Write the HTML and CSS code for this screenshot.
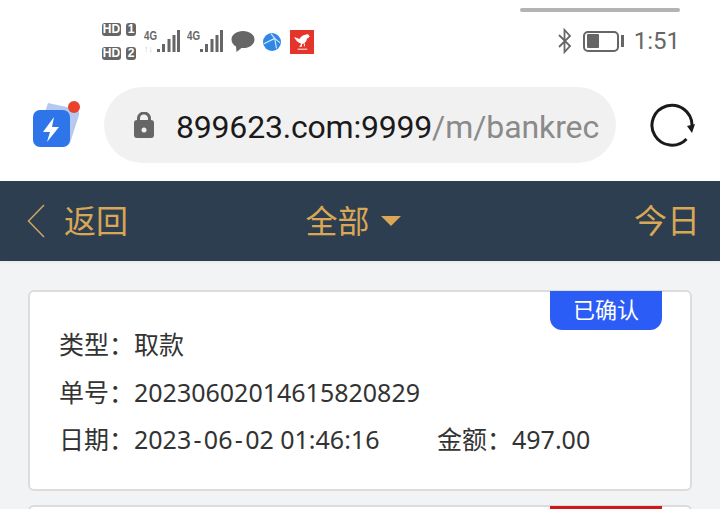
FILE: index.html

```html
<!DOCTYPE html>
<html lang="zh-CN">
<head>
  <meta charset="UTF-8">
  <title>全部</title>
  <link rel="stylesheet" href="styles.css">
</head>
<body>
  <div class="gesture-bar"></div>

  <div class="status-bar">
    <div class="status-left">
      <div class="hd-col">
        <div class="hd-row"><span class="hd-pill">HD</span><span class="sim-num">1</span></div>
        <div class="hd-row"><span class="hd-pill">HD</span><span class="sim-num">2</span></div>
      </div>
      <svg class="signal" width="36" height="26" viewBox="0 0 36 26">
        <text x="0" y="12" class="net-label" textLength="13" lengthAdjust="spacingAndGlyphs">4G</text>
        <text x="0" y="24" class="net-sub">↑↓</text>
        <rect x="13" y="21" width="3" height="3" fill="#666"/>
        <rect x="18" y="16" width="3" height="8" fill="#666"/>
        <rect x="23.500" y="11" width="3" height="13" fill="#666"/>
        <rect x="28.500" y="7" width="3" height="17" fill="#666"/>
        <rect x="33" y="2" width="3" height="22" fill="#666"/>
      </svg>
      <svg class="signal" width="36" height="26" viewBox="0 0 36 26">
        <text x="0" y="12" class="net-label" textLength="13" lengthAdjust="spacingAndGlyphs">4G</text>
        <rect x="13" y="21" width="3" height="3" fill="#666"/>
        <rect x="18" y="16" width="3" height="8" fill="#666"/>
        <rect x="23.500" y="11" width="3" height="13" fill="#666"/>
        <rect x="28.500" y="7" width="3" height="17" fill="#666"/>
        <rect x="33" y="2" width="3" height="22" fill="#666"/>
      </svg>
      <svg class="msg-icon" width="24" height="22" viewBox="0 0 24 22">
        <path d="M12 0C5.500 0 .5 3.600 .5 8.500c0 3 1.800 5.500 4.500 7L5.500 21l5-4c.5 0 1 .1 1.500 .1 6.500 0 11.500-3.700 11.500-8.600S18.500 0 12 0z" fill="#666"/>
      </svg>
      <svg class="globe-icon" width="18" height="18" viewBox="0 0 20 20">
        <circle cx="10" cy="10" r="10" fill="#2f88e6"/>
        <path d="M1 12l12-6 2 11M13 6l6 5M13 6L9 1" fill="none" stroke="#d8ebfb" stroke-width="1.200"/>
      </svg>
      <svg class="app-icon" width="24" height="24" viewBox="0 0 25 25">
        <rect width="25" height="25" fill="#e5352a"/>
        <path d="M5 8l5 2c1-3 5-5 9-5l1 2-3 2c0 3-2 5-5 5l-4-2zM12 14v3h-2M15 14v3M8 20h10" fill="#fff" stroke="#fff" stroke-width="1"/>
      </svg>
    </div>
    <div class="status-right">
      <svg width="16" height="26" viewBox="0 0 16 26">
        <path d="M2 7l11 11-5.500 6V2L13 8 2 19" fill="none" stroke="#666" stroke-width="1.800"/>
      </svg>
      <div class="battery">
        <div class="battery-body"><div class="battery-fill"></div></div>
        <div class="battery-cap"></div>
      </div>
      <span class="clock">1:51</span>
    </div>
  </div>

  <div class="url-row">
    <svg class="browser-logo" width="48" height="48" viewBox="0 0 48 48">
      <path d="M16 2L44 8Q48 10 47 14L38 42 10 20z" fill="#b5c8f0"/>
      <rect x="1" y="9" width="37" height="37" rx="7" fill="#2f75ea"/>
      <path d="M22 16L11 31h7L15 41 27 26h-7z" fill="#fff"/>
      <circle cx="42" cy="6" r="6" fill="#e8432e"/>
    </svg>
    <div class="url-box">
      <svg class="lock" width="20" height="26" viewBox="0 0 20 26">
        <path d="M4.500 10V6.500a5.500 5.500 0 0 1 11 0V10" fill="none" stroke="#666" stroke-width="3"/>
        <rect x="0" y="8" width="20" height="18" rx="3" fill="#666"/>
        <circle cx="10" cy="18" r="2.500" fill="#f1f1f1"/>
      </svg>
      <div class="url-text"><span class="url-host">899623.com:9999</span>/m/bankrec</div>
    </div>
    <svg class="reload" width="46" height="46" viewBox="0 0 46 46">
      <path d="M36.500 37A20 20 0 1 1 42 23" fill="none" stroke="#1a1a1a" stroke-width="3"/>
      <path d="M37 24l8-2-3 9z" fill="#1a1a1a"/>
    </svg>
  </div>

  <div class="nav">
    <div class="nav-back">
      <svg width="18" height="34" viewBox="0 0 18 34">
        <path d="M17 1L1.500 17 17 33" fill="none" stroke="#d0a560" stroke-width="1.500"/>
      </svg>
      <span>返回</span>
    </div>
    <div class="nav-title"><span>全部</span><span class="caret"></span></div>
    <div class="nav-today">今日</div>
  </div>

  <div class="list">
    <div class="card">
      <div class="badge badge-ok">已确认</div>
      <div class="line">类型：取款</div>
      <div class="line">单号：20230602014615820829</div>
      <div class="line line-split">
        <span class="date">日期：2023<span class="hy">-</span>06<span class="hy">-</span>02 01:46:16</span>
        <span>金额：497.00</span>
      </div>
    </div>
    <div class="card">
      <div class="badge badge-bad"></div>
    </div>
  </div>
</body>
</html>
```

FILE: styles.css

```css
html, body {
  margin: 0;
  padding: 0;
  height: 509px;
  overflow: hidden;
}

body {
  font-family: "Noto Sans", "Noto Sans CJK SC", sans-serif;
  background-color: #fff;
  position: relative;
}

.gesture-bar {
  position: absolute;
  top: 8px;
  left: 520px;
  width: 160px;
  height: 4px;
  border-radius: 2px;
  background-color: #b3b3b3;
}

.status-bar {
  display: flex;
  justify-content: space-between;
  align-items: center;
  height: 82px;
  padding: 0 40px 0 102px;
}

.status-left, .status-right {
  display: flex;
  align-items: center;
}

.hd-col {
  display: flex;
  flex-direction: column;
  gap: 11px;
  margin-top: 1px;
  margin-right: 8px;
}

.hd-row {
  display: flex;
  gap: 5px;
}

.hd-pill, .sim-num {
  height: 13px;
  line-height: 13px;
  border-radius: 3px;
  background-color: #666;
  color: #fff;
  font-family: "Liberation Sans", sans-serif;
  font-size: 12px;
  font-weight: bold;
  text-align: center;
}

.hd-pill {
  width: 19px;
}

.sim-num {
  width: 10px;
}

.signal {
  margin-right: 7px;
}

.net-label {
  font-family: "Liberation Sans", sans-serif;
  font-size: 12px;
  font-weight: bold;
  fill: #666;
}

.net-sub {
  font-family: "Liberation Sans", sans-serif;
  font-size: 9px;
  fill: #ccc;
}

.msg-icon, .globe-icon, .app-icon {
  margin-top: 2px;
}

.msg-icon {
  margin-left: 1px;
  margin-right: 8px;
}

.globe-icon {
  margin-right: 9px;
}

.status-right svg {
  margin-right: 10px;
}

.battery {
  display: flex;
  align-items: center;
  gap: 2px;
  margin-right: 10px;
}

.battery-body {
  box-sizing: border-box;
  width: 36px;
  height: 21px;
  padding: 1.500px 2px;
  border: 2px solid #666;
  border-radius: 5px;
}

.battery-fill {
  width: 12px;
  height: 100%;
  border-radius: 1px;
  background-color: #666;
}

.battery-cap {
  width: 3px;
  height: 12px;
  background-color: #666;
}

.clock {
  font-family: Roboto, sans-serif;
  font-size: 24px;
  color: #666;
}

.url-row {
  display: flex;
  align-items: center;
  height: 86px;
  margin-bottom: 13px;
  padding-left: 32px;
}

.browser-logo {
  margin-right: 24px;
}

.url-box {
  display: flex;
  align-items: center;
  box-sizing: border-box;
  width: 512px;
  height: 76px;
  padding-left: 30px;
  border-radius: 38px;
  background-color: #f1f1f1;
}

.lock {
  margin-right: 22px;
}

.url-text {
  padding-top: 3px;
  font-family: Roboto, sans-serif;
  font-size: 32px;
  letter-spacing: -0.1px;
  color: #8a8a8a;
  white-space: nowrap;
}

.url-host {
  color: #1a1a1a;
  letter-spacing: -0.2px;
}

.reload {
  margin-left: 34px;
}

.nav {
  display: flex;
  justify-content: space-between;
  align-items: center;
  box-sizing: border-box;
  height: 80px;
  padding: 0 20px 4px 27px;
  background-color: #2c3e50;
  box-shadow: 0 1px 3px rgba(0, 0, 0, 0.06);
  color: #d9a755;
  font-size: 32px;
  position: relative;
}

.nav-back, .nav-title {
  display: flex;
  align-items: center;
}

.nav-back svg {
  margin-right: 19px;
  margin-top: 4px;
}

.nav-title {
  margin-right: 56px;
}

.nav-today {
  font-size: 33px;
}

.caret {
  width: 0;
  height: 0;
  margin-left: 11px;
  margin-top: 3px;
  border-left: 10px solid transparent;
  border-right: 10px solid transparent;
  border-top: 10px solid #d9a755;
}

.list {
  display: flex;
  flex-direction: column;
  gap: 14px;
  height: 248px;
  padding: 29px 28px 0;
  box-sizing: border-box;
  overflow: hidden;
  background-color: #f2f3f5;
}

.card {
  flex: none;
  position: relative;
  box-sizing: border-box;
  height: 201px;
  padding: 29px 29px 0;
  border: 2px solid #dcdcdc;
  border-radius: 6px;
  background-color: #fff;
  color: #333;
  font-size: 25px;
}

.line {
  height: 47.500px;
  line-height: 47.500px;
  white-space: nowrap;
}

.line-split {
  display: flex;
}

.date {
  width: 378px;
}

.hy {
  margin: 0 2.300px;
}

.badge {
  position: absolute;
  top: -1px;
  right: 28px;
  width: 112px;
  height: 39px;
  line-height: 37px;
  border-radius: 0 0 12px 12px;
  color: #fff;
  font-size: 22px;
  text-align: center;
}

.badge-ok {
  background-color: #2b5cf6;
}

.badge-bad {
  background-color: #d0181c;
}
```
